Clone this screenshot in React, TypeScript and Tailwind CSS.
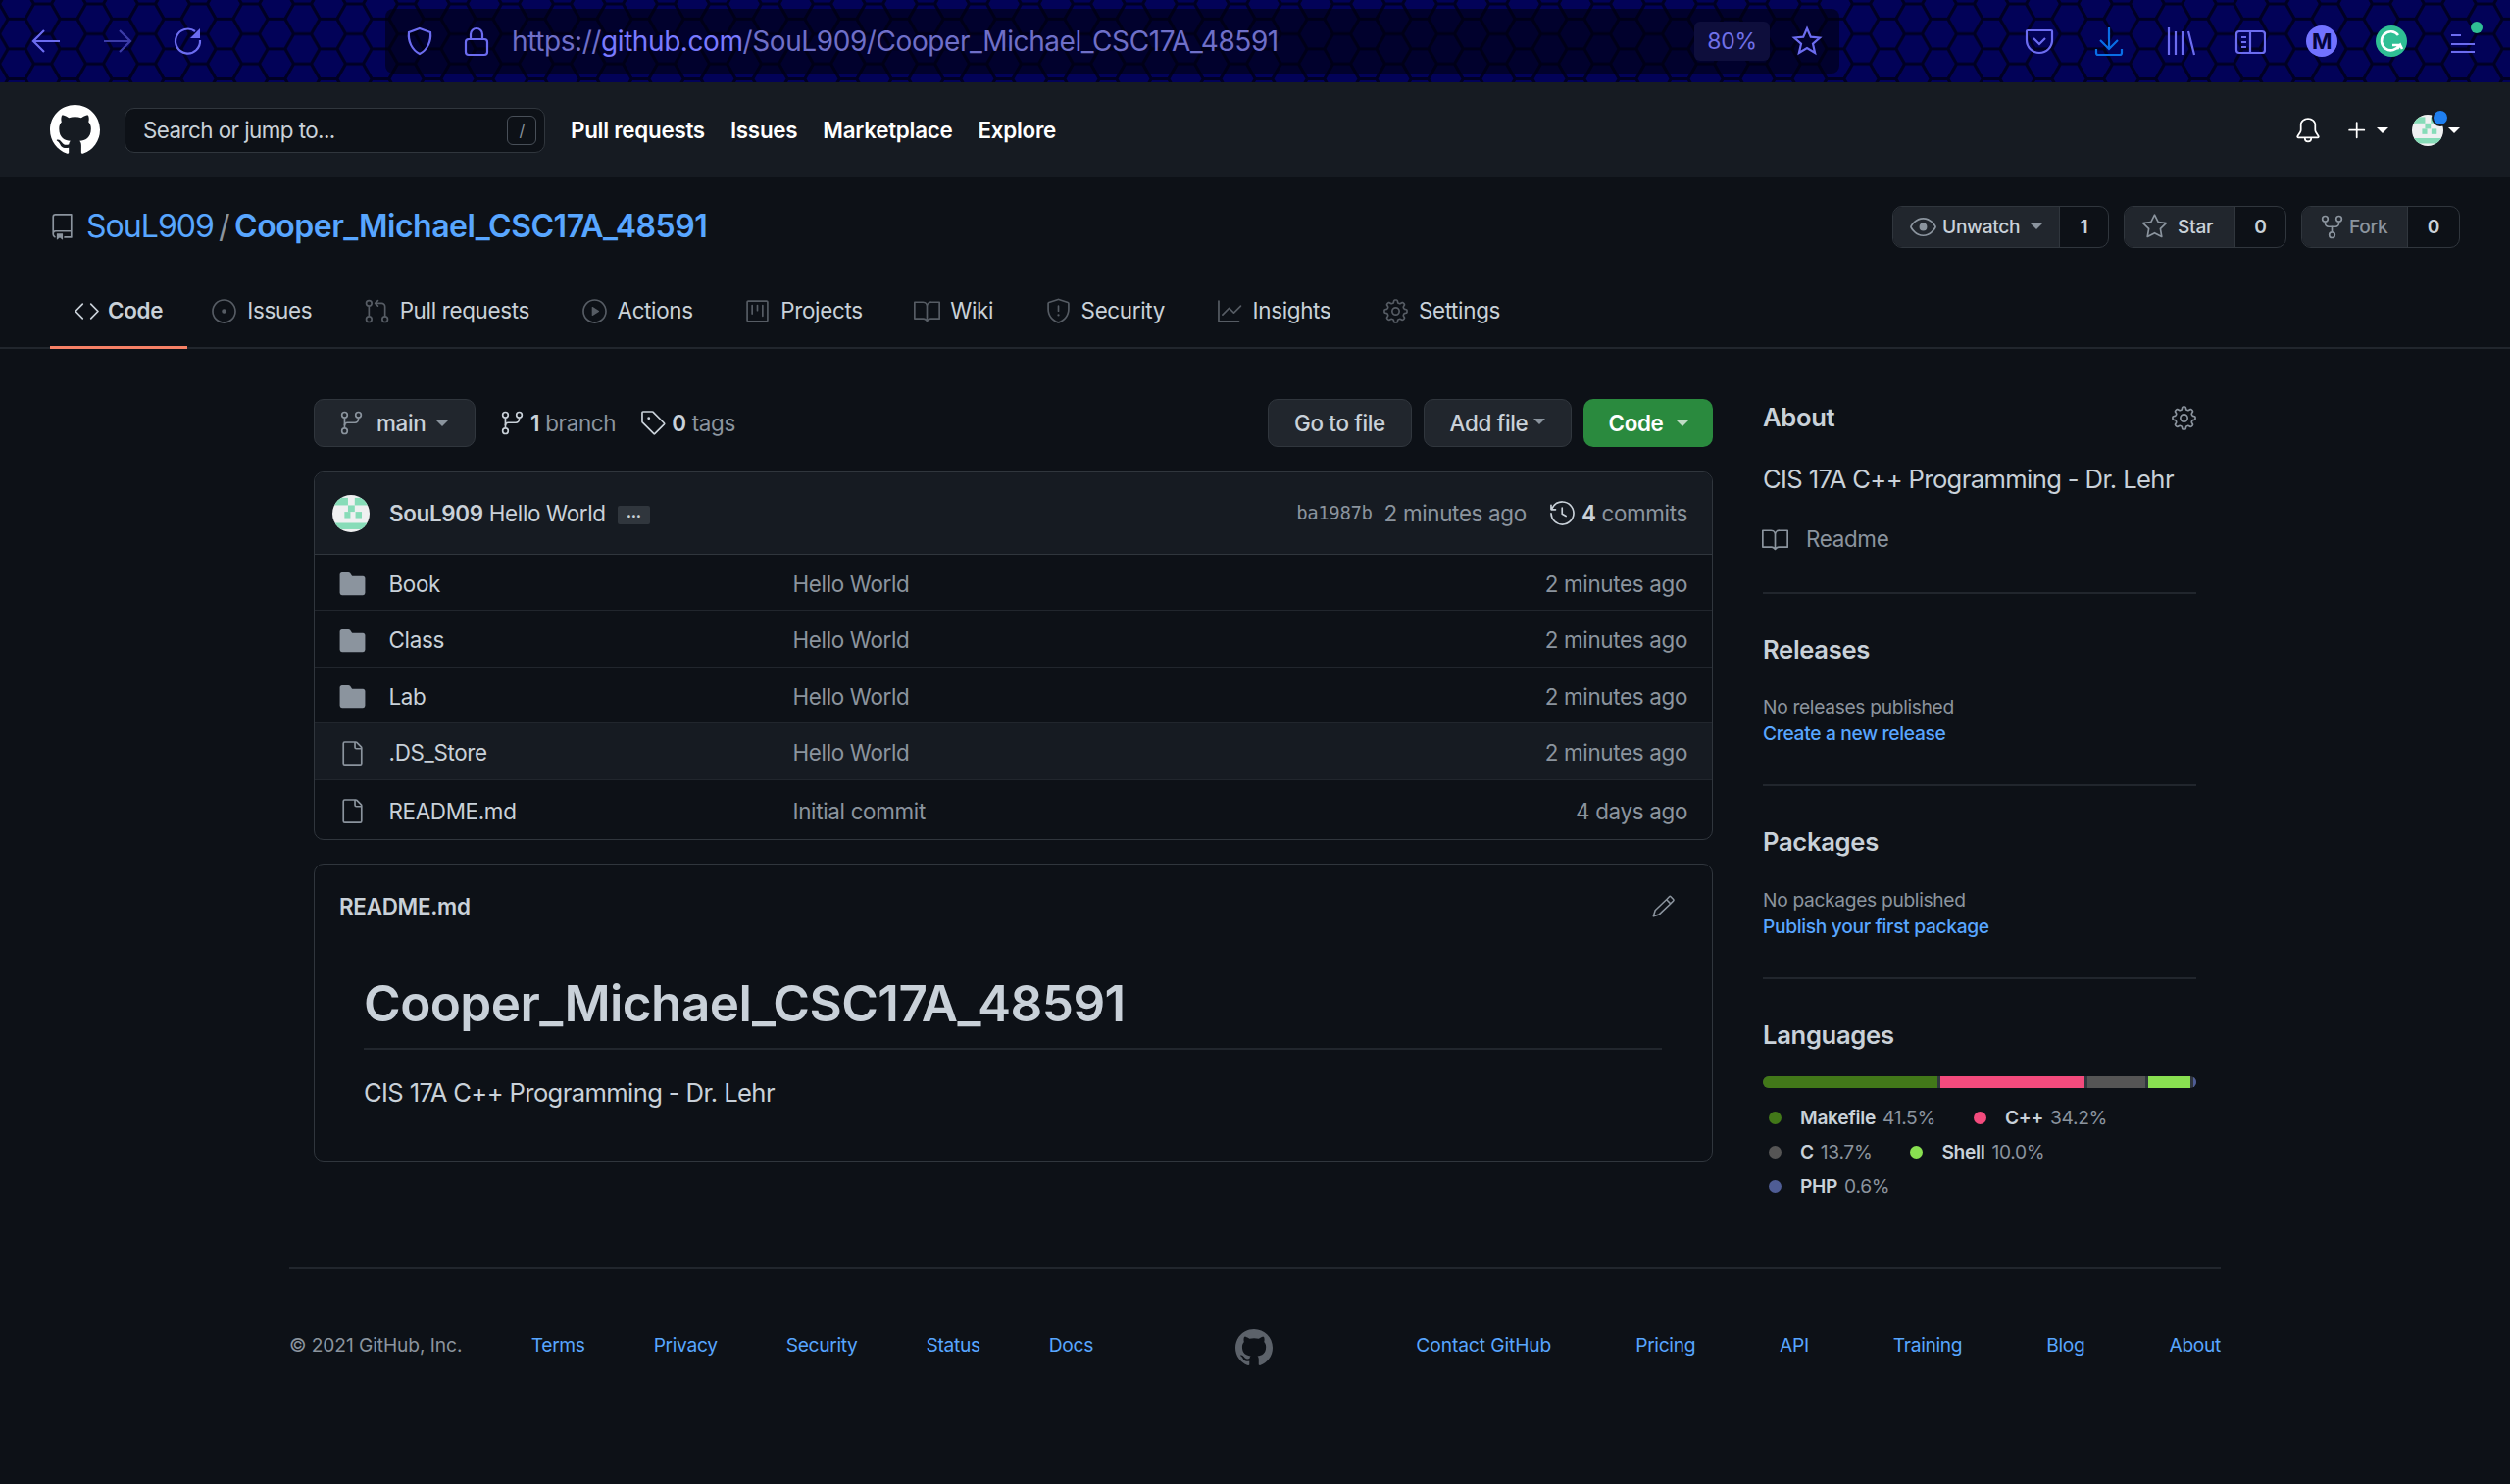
import React from 'react';
import {
  GoBell, GoBook, GoCode, GoEye, GoFile, GoFileDirectoryFill, GoGear, GoGitBranch, GoGitPullRequest,
  GoGraph, GoHistory, GoIssueOpened, GoPencil, GoPlay, GoPlus, GoProject, GoRepo,
  GoRepoForked, GoShield, GoStar, GoTag,
} from 'react-icons/go';

const TABS = [
  { label: 'Code', icon: GoCode, active: true },
  { label: 'Issues', icon: GoIssueOpened },
  { label: 'Pull requests', icon: GoGitPullRequest },
  { label: 'Actions', icon: GoPlay },
  { label: 'Projects', icon: GoProject },
  { label: 'Wiki', icon: GoBook },
  { label: 'Security', icon: GoShield },
  { label: 'Insights', icon: GoGraph },
  { label: 'Settings', icon: GoGear },
];

const FILES = [
  { name: 'Book', dir: true, message: 'Hello World', age: '2 minutes ago', h: 'h-[57px]' },
  { name: 'Class', dir: true, message: 'Hello World', age: '2 minutes ago', h: 'h-[58px]' },
  { name: 'Lab', dir: true, message: 'Hello World', age: '2 minutes ago', h: 'h-[57px]' },
  { name: '.DS_Store', dir: false, message: 'Hello World', age: '2 minutes ago', h: 'h-[58px]', hover: true },
  { name: 'README.md', dir: false, message: 'Initial commit', age: '4 days ago', h: 'h-[60px]' },
];

const LANGS = [
  [
    { name: 'Makefile', pct: '41.5%', dot: 'bg-[#427819]' },
    { name: 'C++', pct: '34.2%', dot: 'bg-[#f34b7d]' },
  ],
  [
    { name: 'C', pct: '13.7%', dot: 'bg-[#555555]' },
    { name: 'Shell', pct: '10.0%', dot: 'bg-[#89e051]' },
  ],
  [{ name: 'PHP', pct: '0.6%', dot: 'bg-[#4f5d95]' }],
];

const MarkGithub = ({ className = '' }: { className?: string }) => (
  <svg viewBox="0 0 16 16" fill="currentColor" className={`shrink-0 ${className}`}>
    <path d="M8 0C3.58 0 0 3.58 0 8c0 3.54 2.29 6.53 5.47 7.59.4.07.55-.17.55-.38 0-.19-.01-.82-.01-1.49-2.01.37-2.53-.49-2.69-.94-.09-.23-.48-.94-.82-1.13-.28-.15-.68-.52-.01-.53.63-.01 1.08.58 1.23.82.72 1.21 1.87.87 2.33.66.07-.52.28-.87.51-1.07-1.78-.2-3.64-.89-3.64-3.95 0-.87.31-1.59.82-2.15-.08-.2-.36-1.02.08-2.12 0 0 .67-.21 2.2.82.64-.18 1.32-.27 2-.27.68 0 1.36.09 2 .27 1.53-1.04 2.2-.82 2.2-.82.44 1.1.16 1.92.08 2.12.51.56.82 1.27.82 2.15 0 3.07-1.87 3.75-3.65 3.95.29.25.54.73.54 1.48 0 1.07-.01 1.93-.01 2.2 0 .21.15.46.55.38A8.013 8.013 0 0016 8c0-4.42-3.58-8-8-8z" />
  </svg>
);

const Caret = ({ className = '' }: { className?: string }) => (
  <span className={`inline-block w-0 h-0 border-x-[6px] border-x-transparent border-t-[6px] ${className}`} />
);

const Avatar = ({ size }: { size: string }) => (
  <svg viewBox="0 0 20 20" className={`${size} shrink-0 rounded-full`}>
    <rect width="20" height="20" fill="#eff0f1" />
    <rect y="1.5" width="8.4" height="4" fill="#87dcb8" />
    <rect x="12" y="1.5" width="8" height="4" fill="#87dcb8" />
    <rect x="8.4" y="5.5" width="3.6" height="3.5" fill="#87dcb8" />
    <rect x="6.5" y="9" width="3.2" height="3.4" fill="#87dcb8" />
    <rect x="12.4" y="9" width="3.4" height="3.4" fill="#87dcb8" />
    <rect y="15" width="20" height="3.4" fill="#87dcb8" />
  </svg>
);

const ToolIcon = ({ children, className }: { children: React.ReactNode; className: string }) => (
  <svg viewBox="0 0 32 32" fill="none" stroke="currentColor" strokeWidth="2.2" className={`w-8 h-8 shrink-0 ${className}`}>
    {children}
  </svg>
);

const HexBackground = () => (
  <svg className="absolute inset-0 w-full h-full">
    <defs>
      <pattern id="hex" width="53" height="30.6" patternUnits="userSpaceOnUse" patternTransform="translate(17 4)">
        <g fill="#020258" stroke="#000024" strokeWidth="3">
          <path d="M-17.6 0 L-8.8 -15.3 L8.8 -15.3 L17.6 0 L8.8 15.3 L-8.8 15.3 Z" />
          <path d="M-17.6 30.6 L-8.8 15.3 L8.8 15.3 L17.6 30.6 L8.8 45.9 L-8.8 45.9 Z" />
          <path d="M35.4 0 L44.2 -15.3 L61.8 -15.3 L70.6 0 L61.8 15.3 L44.2 15.3 Z" />
          <path d="M35.4 30.6 L44.2 15.3 L61.8 15.3 L70.6 30.6 L61.8 45.9 L44.2 45.9 Z" />
          <path d="M8.9 15.3 L17.7 0 L35.3 0 L44.1 15.3 L35.3 30.6 L17.7 30.6 Z" />
        </g>
      </pattern>
    </defs>
    <rect width="100%" height="100%" fill="url(#hex)" />
  </svg>
);

const BrowserBar = () => (
  <div className="relative h-[84px] bg-[#020250] overflow-hidden">
    <HexBackground />
    <div className="relative h-full flex items-center pl-[31px] pr-[32px]">
      <ToolIcon className="text-[#6c6cf0]"><path d="M30 16H3M14 5 3 16l11 11" /></ToolIcon>
      <ToolIcon className="ml-[41px] text-[#3c3ca8]"><path d="M2 16h27M18 5l11 11-11 11" /></ToolIcon>
      <ToolIcon className="ml-[40px] text-[#6c6cf0]">
        <path d="M28 15A12.5 12.5 0 1 1 23 6" />
        <path d="M28 3v10H18z" fill="currentColor" stroke="none" />
      </ToolIcon>
      <div className="ml-[185px] flex-1 h-[66px] rounded-lg bg-[#000010]/60 flex items-center pl-[19px] pr-[17px]">
        <ToolIcon className="text-[#6c6cf0]"><path d="M16 3 27 7c1 9-3 18-11 22C8 25 4 16 5 7z" /></ToolIcon>
        <ToolIcon className="ml-[26px] text-[#6c6cf0]">
          <rect x="5" y="14" width="22" height="16" rx="3" />
          <path d="M10 14V9a6 6 0 0 1 12 0v5" />
        </ToolIcon>
        <div className="ml-[20px] text-[28px] tracking-[-0.015em] whitespace-nowrap text-[#6f6fc8]">
          https://<span className="text-[#7a7aff]">github.com</span>/SouL909/Cooper_Michael_CSC17A_48591
        </div>
        <div className="ml-auto h-[40px] w-[77px] rounded-md bg-[#0e0e3c] flex items-center justify-center text-[23px] text-[#7070e8]">80%</div>
        <ToolIcon className="ml-[22px] text-[#6c6cf0]"><path d="m16 3 3.8 8.6 9.2.9-7 6.2 2.1 9.3-8.1-4.9-8.1 4.9 2.1-9.3-7-6.2 9.2-.9z" /></ToolIcon>
      </div>
      <ToolIcon className="ml-[188px] text-[#6c6cf0]"><path d="M4 5h24a1 1 0 0 1 1 1v9a13 13 0 0 1-26 0V6a1 1 0 0 1 1-1z" /><path d="m10 13 6 6 6-6" /></ToolIcon>
      <ToolIcon className="ml-[39px] text-[#0a6fe6]"><path d="M16 2v22M7 15l9 9 9-9M3 24v4a2 2 0 0 0 2 2h22a2 2 0 0 0 2-2v-4" /></ToolIcon>
      <ToolIcon className="ml-[41px] text-[#6c6cf0]"><path d="M4 2v28M11 6v24M18 6v24M24 6l6 24" /></ToolIcon>
      <ToolIcon className="ml-[39px] text-[#6c6cf0]">
        <rect x="2" y="6" width="29" height="22" rx="3" />
        <path d="M16 6v22M7 12h5M7 17h5M7 22h5" />
      </ToolIcon>
      <div className="ml-[41px] w-8 h-8 rounded-full bg-[#7272ff] flex items-center justify-center text-[22px] font-bold text-[#03033c]">M</div>
      <div className="ml-[39px] w-8 h-8 rounded-full bg-[#2fbf94] flex items-center justify-center">
        <svg viewBox="0 0 32 32" fill="none" stroke="#fff" strokeWidth="2.6" className="w-8 h-8">
          <path d="M23 10a9.5 9.5 0 1 0 1 10h-7" />
          <path d="M22 24l3-4 2 4" />
        </svg>
      </div>
      <div className="relative ml-[41px]">
        <ToolIcon className="text-[#6c6cf0]"><path d="M4 10h10M4 19h24M4 27h24" /></ToolIcon>
        <span className="absolute -top-[4px] -right-[4px] w-3 h-3 rounded-full bg-[#2fbf94]" />
      </div>
    </div>
  </div>
);

const GithubHeader = () => (
  <div className="h-[97px] bg-[#161b22] flex items-center px-[51px] text-[22.4px] text-white">
    <MarkGithub className="w-[51px] h-[51px]" />
    <div className="ml-[25px] w-[429px] h-[46px] rounded-[10px] border border-[#30363d] bg-[#0d1117] flex items-center pl-[18px] pr-[8px] tracking-[-0.025em] text-[#c9d1d9]">
      Search or jump to...
      <span className="ml-auto w-[30px] h-[30px] rounded-md border border-[#484f58] flex items-center justify-center text-[16px] text-[#8b949e]">/</span>
    </div>
    <div className="ml-[26px] flex gap-[26px] font-semibold tracking-[-0.012em]">
      <span>Pull requests</span>
      <span>Issues</span>
      <span>Marketplace</span>
      <span>Explore</span>
    </div>
    <GoBell className="ml-auto w-[28px] h-[28px]" />
    <GoPlus className="ml-[22px] w-[28px] h-[28px]" />
    <Caret className="ml-[6px] border-t-white" />
    <span className="relative ml-[24px]">
      <Avatar size="w-[32px] h-[32px]" />
      <span className="absolute -top-[6px] -right-[6px] w-[18px] h-[18px] rounded-full bg-[#1f7ff0] border-2 border-[#161b22]" />
    </span>
    <Caret className="ml-[5px] border-t-white" />
  </div>
);

const Counter = ({
  icon: Icon, label, count, caret, width, countWidth, gap, dim,
}: {
  icon: React.ElementType; label: string; count: string; caret?: boolean; width: string; countWidth: string; gap: string; dim?: boolean;
}) => (
  <div className="flex h-[43px] rounded-[10px] border border-[#30363d] overflow-hidden text-[19.2px] font-medium">
    <div className={`${width} bg-[#21262d] border-r border-[#30363d] flex items-center pl-[18px] ${dim ? 'text-[#8b949e]' : 'text-[#c9d1d9]'}`}>
      <Icon className={`w-[27px] h-[27px] -ml-px text-[#8b949e] ${gap}`} />
      {label}
      {caret && <Caret className="ml-[11px] border-t-[#8b949e]" />}
    </div>
    <div className={`${countWidth} flex items-center justify-center text-[#c9d1d9] font-semibold`}>{count}</div>
  </div>
);

const RepoHead = () => (
  <div className="border-b-2 border-[#21262d] h-[175px]">
    <div className="pt-[28px] px-[51px] flex items-center h-[72px]">
      <GoRepo className="w-[27px] h-[27px] -mx-px text-[#8b949e]" />
      <div className="ml-[12px] text-[32px] text-[#58a6ff] flex items-center">
        <span className="tracking-[-0.03em]">SouL909</span>
        <span className="text-[#8b949e] mx-[5px]">/</span>
        <span className="font-semibold tracking-[-0.015em]">Cooper_Michael_CSC17A_48591</span>
      </div>
      <div className="ml-auto flex gap-[15px]">
        <Counter icon={GoEye} label="Unwatch" count="1" caret width="w-[170px]" countWidth="w-[49px]" gap="mr-[6px]" />
        <Counter icon={GoStar} label="Star" count="0" width="w-[113px]" countWidth="w-[51px]" gap="mr-[10px]" />
        <Counter icon={GoRepoForked} label="Fork" count="0" width="w-[108px]" countWidth="w-[52px]" gap="mr-[4px]" dim />
      </div>
    </div>
    <div className="mt-[37px] px-[51px] flex h-[66px] text-[22.4px] text-[#c9d1d9]">
      {TABS.map(({ label, icon: Icon, active }) => (
        <div
          key={label}
          className={`pb-[9px] flex items-center border-b-[3px] ${active ? 'pl-[25px] pr-[25px] gap-[8px] border-[#f78166] font-semibold tracking-[-0.012em]' : 'pl-[25px] pr-[28.5px] gap-[10px] border-transparent'}`}
        >
          <Icon className={`w-[27px] h-[27px] -ml-px ${active ? 'text-[#c9d1d9]' : 'text-[#565c64]'}`} />
          {label}
        </div>
      ))}
    </div>
  </div>
);

const BranchBar = () => (
  <div className="flex items-center h-[49px] text-[22.4px]">
    <div className="w-[165px] h-full rounded-[10px] border border-[#30363d] bg-[#21262d] flex items-center pl-[24px] text-[#c9d1d9] font-medium">
      <GoGitBranch className="w-[27px] h-[27px] text-[#8b949e] mr-[12px]" />
      main
      <Caret className="ml-[11px] border-t-[#8b949e]" />
    </div>
    <div className="ml-[25px] flex items-center text-[#8b949e]">
      <GoGitBranch className="w-[27px] h-[27px] -ml-px text-[#c9d1d9] mr-[5px]" />
      <b className="text-[#c9d1d9] font-semibold mr-[6px]">1</b> branch
    </div>
    <div className="ml-[26px] flex items-center text-[#8b949e]">
      <GoTag className="w-[27px] h-[27px] -ml-px text-[#c9d1d9] mr-[5px]" />
      <b className="text-[#c9d1d9] font-semibold mr-[6px]">0</b> tags
    </div>
    <div className="ml-auto w-[147px] h-full rounded-[10px] border border-[#30363d] bg-[#21262d] flex items-center justify-center text-[#c9d1d9] font-medium">Go to file</div>
    <div className="ml-[12px] w-[151px] h-full rounded-[10px] border border-[#30363d] bg-[#21262d] flex items-center justify-center text-[#c9d1d9] font-medium">
      Add file
      <Caret className="ml-[6px] -mt-[4px] border-t-[#8b949e]" />
    </div>
    <div className="ml-[12px] w-[132px] h-full rounded-[10px] bg-[#2a8a3e] flex items-center justify-center text-white font-semibold">
      Code
      <Caret className="ml-[13px] border-t-white/70" />
    </div>
  </div>
);

const FileTable = () => (
  <div className="mt-[25px] rounded-[10px] border border-[#30363d] overflow-hidden text-[22.4px]">
    <div className="h-[84px] bg-[#161b22] border-b border-[#30363d] flex items-center pl-[18px] pr-[25px]">
      <Avatar size="w-[38px] h-[38px]" />
      <span className="ml-[20px] font-semibold text-[#c9d1d9]">SouL909</span>
      <span className="ml-[6px] text-[#c9d1d9]">Hello World</span>
      <span className="ml-[12px] mt-[3px] w-[33px] h-[19px] rounded-[2px] bg-[#30363d] flex items-center justify-center text-[16px] font-bold leading-none pb-[6px] text-[#c9d1d9]">...</span>
      <span className="ml-auto font-['DejaVu_Sans_Mono',monospace] tracking-[-0.02em] text-[19px] text-[#8b949e]">ba1987b</span>
      <span className="ml-[12px] text-[#8b949e]">2 minutes ago</span>
      <GoHistory className="ml-[23px] w-[27px] h-[27px] -mr-px text-[#c9d1d9]" />
      <span className="ml-[7px] text-[#8b949e]"><b className="font-semibold text-[#c9d1d9]">4</b> commits</span>
    </div>
    {FILES.map((f, i) => (
      <div
        key={f.name}
        className={`${f.h} pt-[3px] flex items-center pl-[26px] pr-[25px] ${i < FILES.length - 1 ? 'border-b border-[#21262d]' : ''} ${f.hover ? 'bg-[#161b22]' : ''}`}
      >
        {f.dir ? (
          <GoFileDirectoryFill className="w-[31px] h-[31px] -mx-[3px] -my-[3px] text-[#8b949e]" />
        ) : (
          <GoFile className="w-[27px] h-[27px] -mx-px text-[#8b949e]" />
        )}
        <span className="ml-[24.5px] w-[412px] text-[#c9d1d9]">{f.name}</span>
        <span className="text-[#8b949e]">{f.message}</span>
        <span className="ml-auto text-[#8b949e]">{f.age}</span>
      </div>
    ))}
  </div>
);

const Readme = () => (
  <div className="mt-[24px] h-[304px] rounded-[10px] border border-[#30363d] text-[#c9d1d9]">
    <div className="h-[85px] flex items-center pl-[25px] pr-[37px] text-[22.4px] font-semibold tracking-[-0.012em]">
      README.md
      <GoPencil className="ml-auto w-[25px] h-[25px] text-[#8b949e]" />
    </div>
    <div className="pl-[50px] pr-[51px]">
      <h1 className="mt-[25px] pb-[12px] h-[79px] border-b-2 border-[#21262d] text-[51.2px] leading-[62px] font-semibold tracking-[-0.011em]">Cooper_Michael_CSC17A_48591</h1>
      <p className="mt-[28px] text-[25.6px] leading-[32px] tracking-[-0.024em]">CIS 17A C++ Programming - Dr. Lehr</p>
    </div>
  </div>
);

const SideSection = ({ title, children, last }: { title: string; children: React.ReactNode; last?: boolean }) => (
  <div className={`pt-[41px] ${last ? '' : 'pb-[38px] border-b-2 border-[#21262d]'}`}>
    <h2 className="text-[25.6px] leading-[32px] font-semibold tracking-[-0.012em] text-[#c9d1d9]">{title}</h2>
    {children}
  </div>
);

const Sidebar = () => (
  <div className="w-[442px] shrink-0 ml-[51px]">
    <div className="pb-[38px] border-b-2 border-[#21262d]">
      <div className="mt-[3px] flex items-center justify-between text-[25.6px] leading-[32px] font-semibold tracking-[-0.012em] text-[#c9d1d9]">
        About
        <GoGear className="w-[27px] h-[27px] -mr-px text-[#8b949e]" />
      </div>
      <p className="mt-[31px] text-[25.6px] leading-[32px] tracking-[-0.024em] text-[#c9d1d9]">CIS 17A C++ Programming - Dr. Lehr</p>
      <div className="mt-[29px] flex items-center text-[22.4px] leading-[32px] text-[#8b949e]">
        <GoBook className="w-[27px] h-[27px] -ml-px mr-[18px]" />
        Readme
      </div>
    </div>
    <SideSection title="Releases">
      <p className="mt-[29px] text-[19.2px] leading-[27px] text-[#8b949e]">No releases published</p>
      <p className="text-[19.2px] leading-[27px] font-medium text-[#58a6ff]">Create a new release</p>
    </SideSection>
    <SideSection title="Packages">
      <p className="mt-[30px] text-[19.2px] leading-[27px] text-[#8b949e]">No packages published</p>
      <p className="text-[19.2px] leading-[27px] font-medium text-[#58a6ff]">Publish your first package</p>
    </SideSection>
    <SideSection title="Languages" last>
      <div className="mt-[26px] h-[12px] rounded-full overflow-hidden bg-[#30363d] flex">
        <span className="w-[178px] bg-[#427819]" />
        <span className="ml-[3px] w-[147px] bg-[#f34b7d]" />
        <span className="ml-[3px] w-[59px] bg-[#555555]" />
        <span className="ml-[3px] w-[43px] bg-[#89e051]" />
        <span className="ml-[3px] flex-1 bg-[#4f5d95]" />
      </div>
      <div className="mt-[13px] flex flex-col text-[19.2px] leading-[35px]">
        {LANGS.map((row, i) => (
          <div key={i} className="flex pl-[6px]">
            {row.map((l) => (
              <div key={l.name} className="flex items-center mr-[39px]">
                <span className={`w-[13px] h-[13px] rounded-full ${l.dot}`} />
                <b className="ml-[19px] font-semibold text-[#c9d1d9]">{l.name}</b>
                <span className="ml-[7px] text-[#8b949e]">{l.pct}</span>
              </div>
            ))}
          </div>
        ))}
      </div>
    </SideSection>
  </div>
);

const Footer = () => (
  <div className="mx-auto mt-[65px] w-[1970px] border-t-2 border-[#21262d] pt-[55px] flex items-center justify-between text-[19.2px] leading-[24px] text-[#58a6ff] whitespace-nowrap">
    <div className="flex gap-[70px] w-[820px]">
      <span className="w-[177px] tracking-[-0.005em] text-[#8b949e]">© 2021 GitHub, Inc.</span>
      <span>Terms</span>
      <span>Privacy</span>
      <span>Security</span>
      <span>Status</span>
      <span>Docs</span>
    </div>
    <MarkGithub className="w-[38px] h-[38px] mt-[6px] text-[#5c626a]" />
    <div className="flex gap-[86px] w-[822px] justify-end">
      <span className="tracking-[-0.005em]">Contact GitHub</span>
      <span>Pricing</span>
      <span>API</span>
      <span>Training</span>
      <span>Blog</span>
      <span>About</span>
    </div>
  </div>
);

export default function App() {
  return (
    <div className="min-h-[1514px] bg-[#0d1117] font-['Inter',sans-serif] tracking-[-0.02em] overflow-hidden">
      <BrowserBar />
      <GithubHeader />
      <RepoHead />
      <div className="mx-auto mt-[51px] w-[1920px] flex">
        <div className="w-[1427px] shrink-0">
          <BranchBar />
          <FileTable />
          <Readme />
        </div>
        <Sidebar />
      </div>
      <Footer />
    </div>
  );
}
